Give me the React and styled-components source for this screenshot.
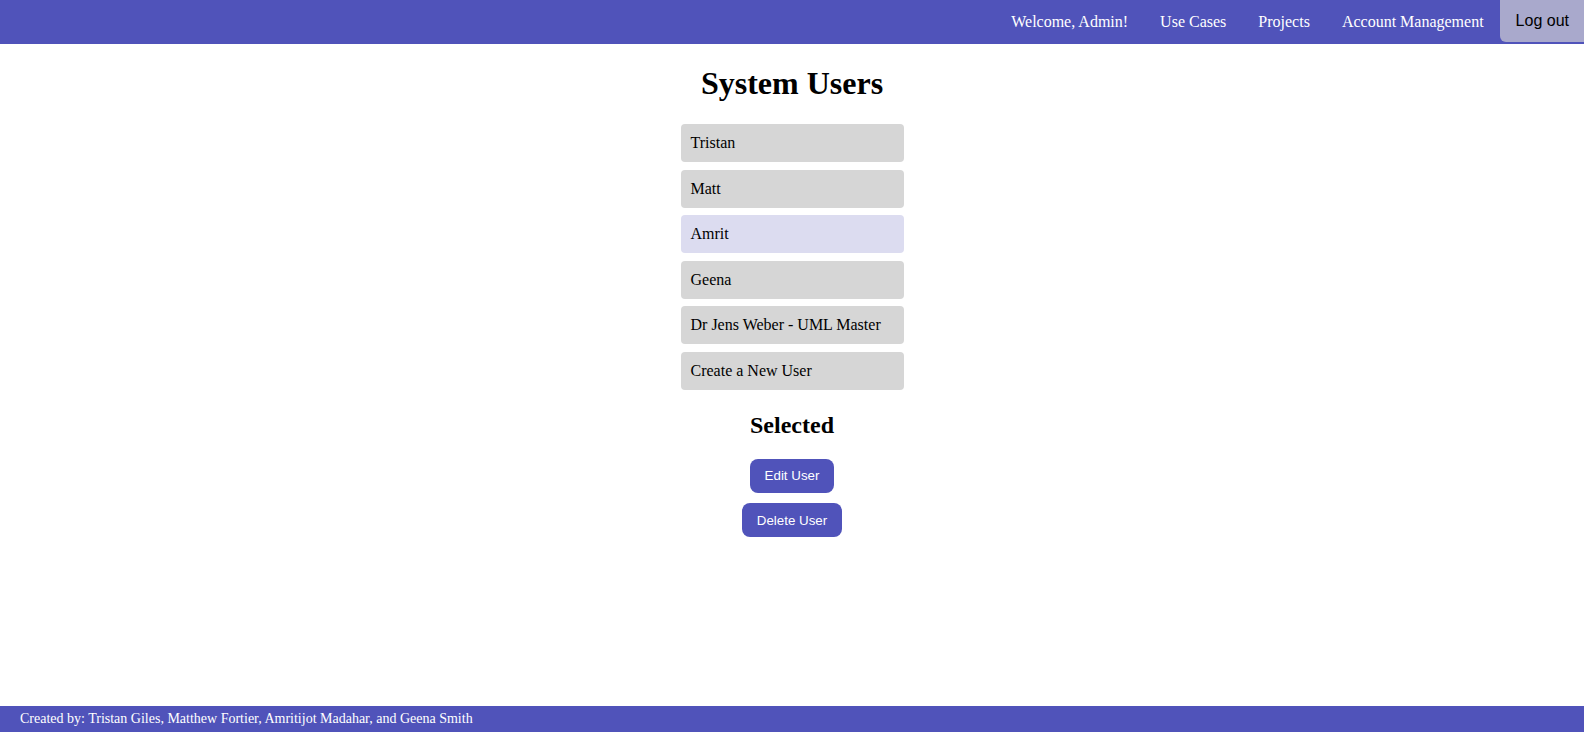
import React, { useState } from 'react';
import styled, { createGlobalStyle } from 'styled-components';

const GlobalStyle = createGlobalStyle`
    html, body {
        margin: 0;
        padding: 0;
        background: #ffffff;
        font-family: "Liberation Serif", "Times New Roman", serif;
    }
`;

//purple bar across the top
const NavBar = styled.nav`
    display: flex;
    justify-content: flex-end;
    align-items: stretch;
    height: 44px;
    background-color: #5053ba;
`;

const NavLink = styled.a`
    display: flex;
    align-items: center;
    padding: 0 16px;
    color: #ffffff;
    font-size: 16px;
    text-decoration: none;
    cursor: pointer;
`;

const LogoutButton = styled.button`
    border: none;
    border-radius: 0 0 0 6px;
    background-color: #a9a9cc;
    color: #000000;
    font-family: "Liberation Sans", Arial, sans-serif;
    font-size: 16px;
    padding: 0 15px 0 16px;
    height: 42px;
    cursor: pointer;
`;

const Main = styled.main`
    display: flex;
    flex-direction: column;
    align-items: center;
`;

const Title = styled.h1`
    font-size: 32px;
    margin: 21px 0 22px;
`;

const UserList = styled.div`
    display: flex;
    flex-direction: column;
    gap: 7.6px;
`;

const UserItem = styled.div`
    box-sizing: border-box;
    width: 223px;
    height: 38px;
    display: flex;
    align-items: center;
    padding-left: 10px;
    border-radius: 4px;
    font-size: 16px;
    background-color: ${(props) => (props.selected ? '#dcdcf0' : '#d6d6d6')};
    cursor: pointer;
`;

const SubTitle = styled.h2`
    font-size: 24px;
    margin: 22px 0 20px;
`;

const ActionButton = styled.button`
    border: none;
    border-radius: 8px;
    background-color: #5053ba;
    color: #ffffff;
    font-family: "Liberation Sans", Arial, sans-serif;
    font-size: 13.33px;
    height: 34px;
    padding: 0 15px;
    margin-bottom: 10.5px;
    cursor: pointer;
`;

const Footer = styled.footer`
    position: fixed;
    left: 0;
    right: 0;
    bottom: 0;
    height: 26px;
    display: flex;
    align-items: center;
    padding: 0 20px;
    background-color: #5053ba;
    color: #ffffff;
    font-size: 14px;
`;

const users = ['Tristan', 'Matt', 'Amrit', 'Geena', 'Dr Jens Weber - UML Master', 'Create a New User'];

export default function App() {
    const [selected, setSelected] = useState('Amrit');

    return (
        <>
            <GlobalStyle />
            <NavBar>
                <NavLink>Welcome, Admin!</NavLink>
                <NavLink>Use Cases</NavLink>
                <NavLink>Projects</NavLink>
                <NavLink>Account Management</NavLink>
                <LogoutButton>Log out</LogoutButton>
            </NavBar>
            <Main>
                <Title>System Users</Title>
                <UserList>
                    {users.map((u) => (
                        <UserItem key={u} selected={u === selected} onClick={() => setSelected(u)}>
                            {u}
                        </UserItem>
                    ))}
                </UserList>
                <SubTitle>Selected</SubTitle>
                <ActionButton>Edit User</ActionButton>
                <ActionButton>Delete User</ActionButton>
            </Main>
            <Footer>Created by: Tristan Giles, Matthew Fortier, Amritijot Madahar, and Geena Smith</Footer>
        </>
    );
}
